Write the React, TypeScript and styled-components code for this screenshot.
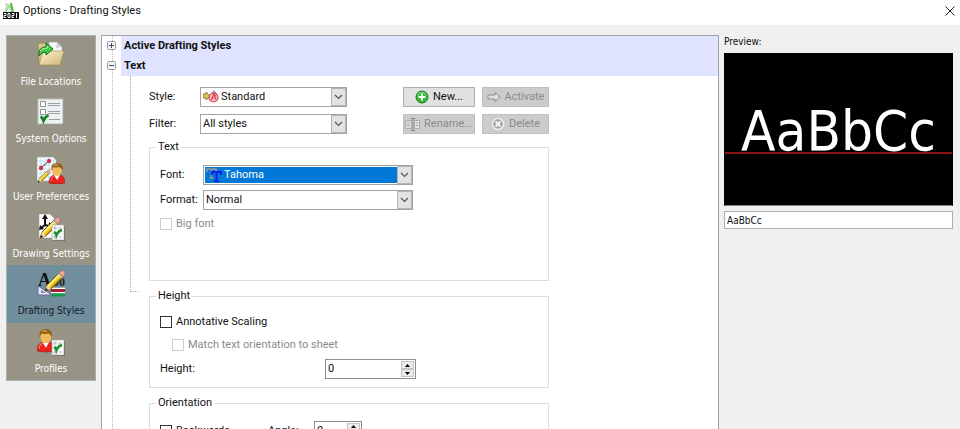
import React from "react";
import styled, { createGlobalStyle, css } from "styled-components";

const UI = `Roboto, "Open Sans", sans-serif`;
const CONDENSED = `"DejaVu Sans Condensed", "DejaVu Sans", sans-serif`;

const Global = createGlobalStyle`
  *, *::before, *::after { box-sizing: border-box; }
  body { margin: 0; background: #f0f0f0; font: 11px/16px ${UI}; color: #111; }
  button, input, select { font: inherit; color: inherit; margin: 0; border-radius: 0; }
`;

const Dialog = styled.div`
  display: flex;
  flex-direction: column;
  height: 100vh;
  overflow: hidden;
`;

const TitleBar = styled.header`
  display: flex;
  align-items: center;
  flex: none;
  gap: 4px;
  height: 25px;
  padding: 0 4px 4px 3px;
  background: #fff;
`;

const Title = styled.h1`
  flex: 1;
  margin: 0;
  font-size: 11px;
  font-weight: 400;
`;

const CloseButton = styled.button`
  display: flex;
  padding: 1px;
  border: 0;
  background: none;
`;

const Body = styled.div`
  display: flex;
  flex: 1;
  min-height: 0;
  gap: 5px;
  padding: 10px 7px 0 6px;
`;

const Sidebar = styled.nav`
  display: grid;
  grid-auto-rows: 1fr;
  flex: none;
  align-self: flex-start;
  width: 90px;
  min-height: 346px;
  background: #979485;
  border: 1px solid #a6b0b8;
`;

const NavItem = styled.button<{ $active?: boolean }>`
  display: flex;
  flex-direction: column;
  align-items: center;
  gap: 6px;
  padding: 5px 0 0;
  border: 0;
  font-family: ${CONDENSED};
  font-size: 10px;
  line-height: 14px;
  white-space: nowrap;
  color: ${(p) => (p.$active ? "#10181f" : "#fff")};
  background: ${(p) => (p.$active ? "#718e9d" : "transparent")};
`;

const Panel = styled.main`
  flex: 1;
  min-width: 0;
  overflow: hidden;
  background: #fff;
  border: 1px solid #a0a3ab;
  border-width: 1px 1px 0 1px;
`;

const Tree = styled.div`
  display: grid;
  grid-template-columns: 19px 1fr;
`;

const Gutter = styled.div`
  display: flex;
  flex-direction: column;
  align-items: center;
  gap: 11px;
  padding-top: 5px;
  background: repeating-linear-gradient(#bbb 0 1px, #fff 1px 2px) 10px 0 / 1px 100% no-repeat;
`;

const Toggle = styled.button`
  display: flex;
  padding: 0;
  border: 0;
  background: #fff;
`;

const SectionTitle = styled.h2`
  margin: 0;
  padding: 0 3px;
  font-size: 11px;
  line-height: 20px;
  font-weight: 700;
  background: #dfe3ff;
`;

const SectionBody = styled.div`
  display: grid;
  grid-template-columns: 8px 1fr;
  gap: 11px;
  padding-left: 9px;
`;

const Branch = styled.div`
  height: 216px;
  border: 1px dotted #aaa;
  border-width: 0 0 1px 1px;
`;

const Form = styled.div`
  display: flex;
  flex-direction: column;
  width: 100%;
  max-width: 400px;
  padding-top: 11px;
`;

const StyleGrid = styled.div`
  display: grid;
  grid-template-columns: 44px 147px 1fr 72px 67px;
  column-gap: 7px;
  row-gap: 7px;
  align-items: center;
  margin-bottom: 5px;
`;

const ToolButton = styled.button<{ $column?: number }>`
  display: flex;
  align-items: center;
  justify-content: center;
  gap: 4px;
  height: 20px;
  padding: 0;
  border: 1px solid #adadad;
  background: #e1e1e1;
  white-space: nowrap;
  ${(p) => p.$column && css`grid-column: ${p.$column};`}
  &:disabled { color: #8a8a8a; background: #ccc; border-color: #bfbfbf; }
`;

const SelectBox = styled.span`
  position: relative;
  display: flex;
  height: 20px;
`;

const NativeSelect = styled.select<{ $icon?: boolean; $selected?: boolean }>`
  appearance: none;
  width: 100%;
  padding: 0 18px 0 ${(p) => (p.$icon ? 20 : 2)}px;
  border: 1px solid #a2a2a2;
  outline: 0;
  background: #fff;
  ${(p) => p.$selected && css`
    color: #fff;
    background: #0078d7;
    box-shadow: inset 0 0 0 1px #fff;
  `}
`;

const SelectIcon = styled.span`
  position: absolute;
  left: 3px;
  top: 3px;
  display: flex;
  pointer-events: none;
`;

const SelectArrow = styled.span`
  position: absolute;
  inset: 1px 1px 1px auto;
  display: flex;
  align-items: center;
  justify-content: center;
  width: 15px;
  border: 1px solid #b5b5b5;
  background: #e3e3e3;
  pointer-events: none;
`;

const Group = styled.fieldset<{ $minHeight: number }>`
  display: flex;
  flex-direction: column;
  min-width: 0;
  min-height: ${(p) => p.$minHeight}px;
  margin: 0 0 7px;
  padding: 6px 10px 7px;
  border: 1px solid #dcdcdc;
`;

const Legend = styled.legend`
  margin-left: -4px;
  padding: 0 2px;
`;

const FieldGrid = styled.div`
  display: grid;
  grid-template-columns: 43px 210px;
  row-gap: 5px;
  padding: 4px 0 2px;
  align-items: center;
`;

const CheckLabel = styled.label<{ $indent?: boolean; $disabled?: boolean }>`
  display: flex;
  align-items: center;
  gap: 4px;
  min-height: 23px;
  padding-left: ${(p) => (p.$indent ? 12 : 0)}px;
  color: ${(p) => (p.$disabled ? "#8a8a8a" : "inherit")};
`;

const CheckBox = styled.input`
  appearance: none;
  width: 12px;
  height: 12px;
  border: 1px solid #333;
  background: #fff;
  &:disabled { border-color: #ccc; }
`;

const HeightRow = styled.div`
  display: grid;
  grid-template-columns: 165px 91px;
  align-items: center;
  padding-top: 3px;
`;

const OrientationRow = styled.div`
  display: grid;
  grid-template-columns: 108px 46px 48px;
  align-items: center;
  padding-top: 2px;
`;

const SpinBox = styled.span`
  display: flex;
  height: 20px;
  padding: 1px;
  border: 1px solid #8c8c8c;
  background: #fff;
`;

const SpinInput = styled.input`
  flex: 1;
  min-width: 0;
  padding: 0 1px;
  border: 0;
  outline: 0;
`;

const SpinButtons = styled.span`
  display: grid;
  grid-template-rows: 1fr 1fr;
  width: 13px;
`;

const SpinButton = styled.button`
  display: flex;
  align-items: center;
  justify-content: center;
  padding: 0;
  border: 1px solid #c4c4c4;
  background: #ececec;
`;

const Preview = styled.aside`
  display: flex;
  flex-direction: column;
  flex: none;
  width: 229px;
  font-family: ${CONDENSED};
`;

const PreviewLabel = styled.label`
  font-size: 10px;
  line-height: 14px;
  margin-bottom: 4px;
`;

const Stage = styled.div`
  display: grid;
  height: 153px;
  margin-bottom: 5px;
  background: linear-gradient(#8c1414, #8c1414) 0 98px / 100% 2px no-repeat #000;
  border: 1px solid #000;
  border-bottom-color: #888;
  color: #fff;
  font-size: 56px;
  line-height: 154px;
  text-align: center;
`;

const PreviewInput = styled.input`
  width: 100%;
  height: 18px;
  padding: 0 2px;
  border: 1px solid #abadb3;
  background: #fff;
  font-size: 10px;
`;

const Chevron = () => (
  <svg width="9" height="6" viewBox="0 0 9 6" fill="none" stroke="#555" strokeWidth="1.2"><path d="M1 1l3.5 3.5L8 1" /></svg>
);

const Triangle = ({ down }: { down?: boolean }) => (
  <svg width="5" height="3" viewBox="0 0 5 3"><path fill="#000" d={down ? "M0 0h5L2.5 3z" : "M0 3h5L2.5 0z"} /></svg>
);

const TreeMark = ({ open }: { open?: boolean }) => (
  <svg width="9" height="9" viewBox="0 0 9 9" fill="none">
    <rect x=".5" y=".5" width="8" height="8" rx="1" fill="#f4f4f4" stroke="#999" />
    <path d={open ? "M2 4.5h5" : "M2 4.5h5M4.5 2v5"} stroke="#3b4a7c" />
  </svg>
);

const AppLogo = () => (
  <svg width="16" height="16" viewBox="0 0 16 16" fill="none">
    <path d="M2 0l4 1 5 8H9L5 4 3 9H1l2-5z" fill="#b5ddb0" />
    <path d="M7 0h2l2 9H8z" fill="#57b947" />
    <path d="M3 9l3-6" stroke="#83c9d2" /><path d="M9 8L5 2" stroke="#c9df78" />
    <rect y="9" width="16" height="7" fill="#111" />
    <path d="M1 10.500h2v2H1v2h2M5 10.500h2v4H5zM9 10.500h2v2H9v2h2M13.500 10v5" stroke="#fff" />
  </svg>
);

const Sheet = ({ x = 0, y = 0 }: { x?: number; y?: number }) => (
  <g transform={`translate(${x} ${y})`}>
    <path d="M1 1h12v15H1z" fill="#444" opacity=".6" />
    <path d="M0 0h12v15H0z" fill="#fafafa" stroke="#aaa" strokeWidth=".6" />
    <path d="M2 2h2v2H2zM2 11h2v2H2zM6 3h4M7 12h3" stroke="#aaa" strokeWidth=".8" fill="none" />
    <path d="M2 7q2 1 2.500 3Q6 6 10 5" stroke="#238f35" strokeWidth="2.600" fill="none" />
  </g>
);

const Pencil = () => (
  <g>
    <path d="M0 20l2-6L14 2l4 4L6 18z" fill="#f2cf22" stroke="#5d4a0c" strokeWidth=".9" />
    <path d="M3 15L15 3" stroke="#fff59a" strokeWidth="1.400" />
    <path d="M5.500 17.500L17.500 5.500" stroke="#b78a10" strokeWidth="1.200" />
    <path d="M14 2l2-2q2-1 3 0t1 3l-2 3z" fill="#efa79a" stroke="#9b695e" strokeWidth=".6" />
    <path d="M13 3l4 4" stroke="#c8ccd0" strokeWidth="1.500" />
    <path d="M0 20l2-6 4 4z" fill="#f3d6a8" /><path d="M0 20l1-3 2 2z" fill="#111" />
  </g>
);

const Person = () => (
  <g>
    <path d="M0 20q0-7 5-8h6q5 1 5 8-8 2-16 0z" fill="#e8231c" stroke="#8c1714" strokeWidth=".5" />
    <path d="M5 12l3 5 3-5z" fill="#fff" /><path d="M2 18q0-4 3-5" stroke="#ff8378" fill="none" />
    <ellipse cx="8" cy="7" rx="5" ry="6" fill="#f0bb5c" />
    <path d="M2.500 8Q1 0 8 0t5.500 8Q13 5 10 4 6 5 4 4 3 6 2.500 8z" fill="#94601c" />
    <ellipse cx="7" cy="2" rx="2.500" ry="1" fill="#c28c41" />
  </g>
);

const FolderIcon = () => (
  <svg width="28" height="28" viewBox="0 0 28 28">
    <defs><linearGradient id="folder" x2="1" y2="1"><stop stopColor="#fff3cc" /><stop offset="1" stopColor="#cdb676" /></linearGradient></defs>
    <path d="M1 4q0-2 2-2h6l2 3h11v18H2z" fill="#d9c68c" stroke="#857446" strokeWidth=".6" />
    <path d="M12 1h8l5 5v12H12z" fill="#f6f8fa" stroke="#9aa3aa" strokeWidth=".6" /><path d="M20 1l5 5-6 1z" fill="#c9d2da" />
    <path d="M6 10h21l-4 14H2z" fill="url(#folder)" stroke="#9d8748" strokeWidth=".6" />
    <path d="M2 15Q1 6 9 6V2l7 6-7 6v-3q-5 0-7 4z" fill="#46cc48" stroke="#12701c" /><path d="M3 10q2-3 7-3l1-2" stroke="#b7f5ac" fill="none" />
  </svg>
);

const OptionsIcon = () => (
  <svg width="28" height="28" viewBox="0 0 28 28" fill="none">
    <path d="M2 2h25v25H2z" fill="#555" opacity=".5" /><path d="M1 1h25v25H1z" fill="#eef0f1" stroke="#bcc0c2" />
    <path d="M3.500 3.500h5v5h-5zM3.500 11.500h5v5h-5z" fill="#fff" stroke="#8b9298" />
    <path d="M11 5.500h12M11 7.500h12M11 13.500h12M11 15.500h12M12 21.500h11" stroke="#9da3a7" />
    <path d="M3.500 18.500q2 1 3 4 2-4 5-5.500" stroke="#17842b" strokeWidth="3" />
  </svg>
);

const PreferencesIcon = () => (
  <svg width="28" height="28" viewBox="0 0 28 28" fill="none">
    <path d="M0 1h16l3 3v21H0z" fill="#f9fcff" stroke="#8aa" strokeWidth=".5" />
    <path d="M0 5h18M0 9h18M0 13h18M0 17h18M0 21h18M4 1v24M8 1v24M12 1v24M16 3v22" stroke="#b6d8ec" strokeWidth=".8" />
    <path d="M4 12L12 5" stroke="#333" /><circle cx="4" cy="12" r="2.200" fill="#c83349" /><circle cx="12" cy="5" r="2.200" fill="#c83349" />
    <g transform="translate(1 14) scale(.62)"><Pencil /></g><g transform="translate(12 7)"><Person /></g>
  </svg>
);

const DrawingIcon = () => (
  <svg width="28" height="28" viewBox="0 0 28 28" fill="none">
    <path d="M2 1h11l4 4v20H2z" fill="#fff" stroke="#999" strokeWidth=".5" />
    <path d="M8 4v8l8 2M8 12l-4 3" stroke="#111" strokeWidth="2" />
    <path d="M5 6l3-5 3 5zM12 9l5 5-6 3zM2 17l1-5 4 4z" fill="#111" />
    <g transform="translate(3 5)"><Pencil /></g><Sheet x={15} y={12} />
  </svg>
);

const StylesIcon = () => (
  <svg width="28" height="28" viewBox="0 0 28 28" fill="none">
    <text x="1" y="16" fontFamily="Liberation Serif" fontSize="18" fontWeight="700" fill="#111">A</text>
    <text x="16" y="16" fontFamily="Liberation Serif" fontSize="12" fontWeight="700" fill="#222">00</text>
    <path d="M14 18.500h14M14 22.500h14" stroke="#fff" strokeWidth="1.500" /><path d="M14 20.500h14" stroke="#a81f38" strokeWidth="3" /><path d="M14 25h14" stroke="#159c48" strokeWidth="3" />
    <path d="M1 16v9h14z" fill="#e7e4fb" stroke="#6f6ca8" /><path d="M4 20v3h5z" fill="#8390b3" />
    <g transform="translate(8 1)"><Pencil /></g>
  </svg>
);

const ProfilesIcon = () => (
  <svg width="28" height="28" viewBox="0 0 28 28" fill="none"><g transform="translate(0 1) scale(1.100)"><Person /></g><Sheet x={15} y={12} /></svg>
);

const StandardIcon = () => (
  <svg width="16" height="14" viewBox="0 0 16 14" fill="none">
    <path d="M0 4h3V2l4 4-4 4V8H0z" fill="#d5c84d" stroke="#6a6430" strokeWidth=".8" />
    <path d="M6 6l5-6 4 5-4 7z" fill="#8f9dca" /><circle cx="10.500" cy="7.500" r="4.500" fill="#f6b5b9" stroke="#d9404c" strokeWidth="1.200" /><path d="M8.500 10l2.500-7 2 7M7.500 10.500l6-6" stroke="#d9404c" />
  </svg>
);

const FontIcon = () => (
  <svg width="16" height="14" viewBox="0 0 16 14" fill="none">
    <path d="M1 4V1h9v3M5.500 1v9M3.500 10h4" stroke="#8f979d" strokeWidth="1.700" />
    <path d="M6 7V4h9v3M10.500 4v9M8 13h5" stroke="#0a20e8" strokeWidth="2" />
  </svg>
);

const AddIcon = () => (
  <svg width="14" height="14" viewBox="0 0 14 14"><circle cx="7" cy="7" r="6" fill="#37b83b" stroke="#168222" /><path d="M2.500 5q4-5 9 0" stroke="#91e58c" fill="none" /><path d="M7 3.500v7M3.500 7h7" stroke="#fff" strokeWidth="2" /></svg>
);
const ArrowIcon = () => (
  <svg width="14" height="12" viewBox="0 0 14 12"><path d="M1 4h7V1.500L13 6l-5 4.500V8H1z" fill="#e0e0e0" stroke="#8b8b8b" /></svg>
);
const RenameIcon = () => (
  <svg width="15" height="13" viewBox="0 0 15 13" fill="none"><path d="M.5 2.500h6v8h-6zM9.500 2.500h5v8h-5z" fill="#dedede" stroke="#aaa" /><path d="M2 5h3M2 7.500h3M11 5h2M11 7.500h2" stroke="#aaa" /><path d="M6 .5h4M8 .5v12M6 12.500h4" stroke="#858585" /></svg>
);
const DeleteIcon = () => (
  <svg width="14" height="14" viewBox="0 0 14 14"><circle cx="7" cy="7" r="5.500" fill="#a2a2a2" stroke="#eee" strokeWidth="1.500" /><path d="M4.500 4.500l5 5M9.500 4.500l-5 5" stroke="#f4f4f4" strokeWidth="2" /></svg>
);

const navItems = [
  { label: "File Locations", Icon: FolderIcon },
  { label: "System Options", Icon: OptionsIcon },
  { label: "User Preferences", Icon: PreferencesIcon },
  { label: "Drawing Settings", Icon: DrawingIcon },
  { label: "Drafting Styles", Icon: StylesIcon, active: true },
  { label: "Profiles", Icon: ProfilesIcon },
];

type DropDownProps = { id: string; value: string; icon?: React.ReactNode; selected?: boolean };
const DropDown = ({ id, value, icon, selected }: DropDownProps) => (
  <SelectBox>
    <NativeSelect id={id} defaultValue={value} $icon={!!icon} $selected={selected}><option>{value}</option></NativeSelect>
    {icon && <SelectIcon>{icon}</SelectIcon>}
    <SelectArrow><Chevron /></SelectArrow>
  </SelectBox>
);

const Spinner = ({ id }: { id: string }) => (
  <SpinBox>
    <SpinInput id={id} type="text" defaultValue="0" />
    <SpinButtons>
      <SpinButton type="button" aria-label="Increase"><Triangle /></SpinButton>
      <SpinButton type="button" aria-label="Decrease"><Triangle down /></SpinButton>
    </SpinButtons>
  </SpinBox>
);

export default function App() {
  return (
    <>
      <Global />
      <Dialog>
        <TitleBar>
          <AppLogo />
          <Title>Options - Drafting Styles</Title>
          <CloseButton aria-label="Close">
            <svg width="10" height="10" viewBox="0 0 10 10" stroke="#222"><path d="M.5.5l9 9M9.500.5l-9 9" /></svg>
          </CloseButton>
        </TitleBar>
        <Body>
          <Sidebar>
            {navItems.map(({ label, Icon, active }) => (
              <NavItem key={label} type="button" $active={active}><Icon />{label}</NavItem>
            ))}
          </Sidebar>
          <Panel>
            <Tree>
              <Gutter>
                <Toggle aria-label="Expand Active Drafting Styles"><TreeMark /></Toggle>
                <Toggle aria-label="Collapse Text"><TreeMark open /></Toggle>
              </Gutter>
              <div>
                <SectionTitle>Active Drafting Styles</SectionTitle>
                <SectionTitle>Text</SectionTitle>
                <SectionBody>
                  <Branch />
                  <Form>
                    <StyleGrid>
                      <label htmlFor="style">Style:</label>
                      <DropDown id="style" value="Standard" icon={<StandardIcon />} />
                      <ToolButton $column={4}><AddIcon />New...</ToolButton>
                      <ToolButton disabled><ArrowIcon />Activate</ToolButton>
                      <label htmlFor="filter">Filter:</label>
                      <DropDown id="filter" value="All styles" />
                      <ToolButton $column={4} disabled><RenameIcon />Rename...</ToolButton>
                      <ToolButton disabled><DeleteIcon />Delete</ToolButton>
                    </StyleGrid>
                    <Group $minHeight={142}>
                      <Legend>Text</Legend>
                      <FieldGrid>
                        <label htmlFor="font">Font:</label>
                        <DropDown id="font" value="Tahoma" icon={<FontIcon />} selected />
                        <label htmlFor="format">Format:</label>
                        <DropDown id="format" value="Normal" />
                      </FieldGrid>
                      <CheckLabel $disabled><CheckBox type="checkbox" disabled />Big font</CheckLabel>
                    </Group>
                    <Group $minHeight={100}>
                      <Legend>Height</Legend>
                      <CheckLabel><CheckBox type="checkbox" />Annotative Scaling</CheckLabel>
                      <CheckLabel $indent $disabled><CheckBox type="checkbox" disabled />Match text orientation to sheet</CheckLabel>
                      <HeightRow><label htmlFor="height">Height:</label><Spinner id="height" /></HeightRow>
                    </Group>
                    <Group $minHeight={100}>
                      <Legend>Orientation</Legend>
                      <OrientationRow>
                        <CheckLabel><CheckBox type="checkbox" />Backwards</CheckLabel>
                        <label htmlFor="angle">Angle:</label>
                        <Spinner id="angle" />
                      </OrientationRow>
                    </Group>
                  </Form>
                </SectionBody>
              </div>
            </Tree>
          </Panel>
          <Preview>
            <PreviewLabel htmlFor="sample">Preview:</PreviewLabel>
            <Stage>AaBbCc</Stage>
            <PreviewInput id="sample" defaultValue="AaBbCc" />
          </Preview>
        </Body>
      </Dialog>
    </>
  );
}
